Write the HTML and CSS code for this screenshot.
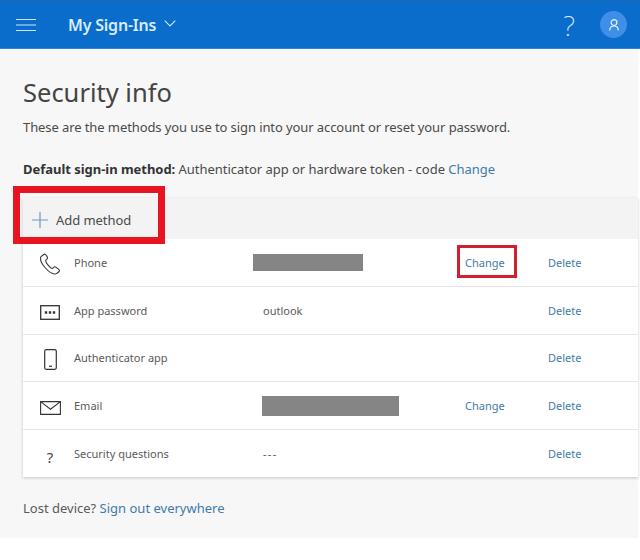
FILE: index.html
```html
<!DOCTYPE html>
<html lang="en">
<head>
<meta charset="utf-8">
<title>Security info</title>
<link rel="stylesheet" href="styles.css">
</head>
<body>
<header class="topbar">
  <svg class="burger" width="20" height="12" viewBox="0 0 20 12"><path d="M0 .5h20M0 6h20M0 11.500h20" stroke="#cfe6fb" stroke-width="1" fill="none"/></svg>
  <span class="brand">My Sign-Ins</span>
  <svg class="chev" width="12" height="7" viewBox="0 0 12 7"><path d="M.7.7 6 6l5.300-5.300" stroke="#cfe6fb" stroke-width="1.100" fill="none"/></svg>
  <span class="help">?</span>
  <span class="avatar">
    <svg width="10" height="12" viewBox="0 0 10 12"><circle cx="5" cy="3.600" r="2.900" fill="none" stroke="#e8f3fd" stroke-width="1.200"/><path d="M.7 11.500c0-3 1.600-4.500 4.300-4.500s4.300 1.500 4.300 4.500" fill="none" stroke="#e8f3fd" stroke-width="1.200"/></svg>
  </span>
</header>
<main class="content">
  <h1 class="title">Security info</h1>
  <p class="intro">These are the methods you use to sign into your account or reset your password.</p>
  <p class="default"><b>Default sign-in method:</b> Authenticator app or hardware token - code <a class="link">Change</a></p>
  <section class="card">
    <div class="toolbar">
      <svg width="16" height="16" viewBox="0 0 16 16"><path d="M8 0v16M0 8h16" stroke="#6f97c0" stroke-width="1.200" fill="none"/></svg>
      <span>Add method</span>
    </div>
    <div class="row">
      <span class="icon"><svg width="22" height="22" viewBox="0 0 22 22"><path d="M5.500 1 2 3.500C.8 6 2.500 10.500 6 14.500s8 7 11 6.300c1.500-.5 3-1.700 3.500-3 .2-1-3.500-4-4.800-4-1 0-1.500 1.800-2.700 1.700-1.800-.3-6.500-6-6.300-8 .2-1 1.800-1.300 1.800-2.300C8.500 4 6.700 1 5.500 1Z" fill="none" stroke="#3a3a3a" stroke-width="1.100"/></svg></span>
      <span class="name">Phone</span>
      <span class="value"><i class="redact redact-a"></i></span>
      <a class="link change">Change</a>
      <a class="link delete">Delete</a>
    </div>
    <div class="row">
      <span class="icon"><svg width="20" height="15" viewBox="0 0 20 15"><rect x=".7" y=".7" width="18.600" height="13.600" fill="none" stroke="#333" stroke-width="1.300"/><path d="M4.800 7.500h2.400M8.800 7.500h2.400M12.800 7.500h2.400" stroke="#333" stroke-width="2.400" fill="none"/></svg></span>
      <span class="name">App password</span>
      <span class="value">outlook</span>
      <a class="link delete">Delete</a>
    </div>
    <div class="row">
      <span class="icon"><svg width="13" height="21" viewBox="0 0 13 21"><rect x=".7" y=".7" width="11.600" height="19.600" rx="1.500" fill="none" stroke="#333" stroke-width="1.200"/><path d="M5 17.300h3" stroke="#333" stroke-width="1.200"/></svg></span>
      <span class="name">Authenticator app</span>
      <span class="value"></span>
      <a class="link delete">Delete</a>
    </div>
    <div class="row">
      <span class="icon"><svg width="21" height="14" viewBox="0 0 21 14"><path d="M.6.600h19.800v12.800H.6zM.6.600l9.900 7.600L20.400.6" fill="none" stroke="#333" stroke-width="1.100"/></svg></span>
      <span class="name">Email</span>
      <span class="value"><i class="redact redact-b"></i></span>
      <a class="link change">Change</a>
      <a class="link delete">Delete</a>
    </div>
    <div class="row">
      <span class="icon qmark">?</span>
      <span class="name">Security questions</span>
      <span class="value dashes">---</span>
      <a class="link delete">Delete</a>
    </div>
  </section>
  <p class="lost">Lost device? <a class="link">Sign out everywhere</a></p>
</main>
<div class="mark mark-add"></div>
<div class="mark mark-change"></div>
</body>
</html>
```
FILE: styles.css
```css
* { box-sizing: border-box; }
html, body { margin: 0; height: 100%; background: #fff; overflow: hidden; }
body { font-family: "Noto Sans", "Open Sans", sans-serif; color: #404040; position: relative; }
.topbar { height: 49px; background: #0a6ccb; display: flex; align-items: center; padding: 0 13px 0 16px; border-bottom: 1px solid #2f86d6; border-top: 1px solid #1a69b8; }
.burger { flex: none; }
.brand { margin-left: 32px; font-size: 16px; font-weight: 600; color: #d9ecfc; letter-spacing: -.2px; }
.chev { margin-left: 8px; margin-top: -2px; }
.help { margin-left: auto; font-size: 28px; color: #d8ebfb; font-weight: 200; line-height: 1; }
.avatar { margin-left: 25px; width: 27px; height: 27px; border-radius: 50%; background: #3f8ee8; display: flex; align-items: center; justify-content: center; }
.content { width: 638px; height: 489px; background: #f7f7f7; padding-top: 25px; }
.title { margin: 0 0 0 23px; font-size: 25.500px; font-weight: 400; line-height: 36px; color: #444; }
.intro { margin: 8px 0 0 23px; font-size: 13px; line-height: 18px; letter-spacing: -.09px; color: #4a4a4a; }
.default { margin: 24px 0 0 23px; font-size: 13px; line-height: 18px; letter-spacing: -.03px; color: #4a4a4a; }
.default b { font-weight: 700; color: #333; }
.link { color: #3f7ba8; }
.card { margin: 20px 0 0 23px; background: #fff; box-shadow: 0 1px 3px rgba(0,0,0,.2); height: 279px; display: flex; flex-direction: column; }
.toolbar { height: 41px; flex: none; background: #f3f3f3; display: flex; align-items: center; gap: 8px; padding: 2px 0 0 9px; font-size: 13px; letter-spacing: -.05px; color: #4a4a4a; }
.row { flex: 1; display: flex; align-items: center; font-size: 11px; border-bottom: 1px solid #e8e8e8; color: #5a5a5a; }
.row:last-child { border-bottom: 0; }
.icon { width: 51px; display: flex; justify-content: center; padding: 4px 0 0 3px; flex: none; }
.qmark { font-size: 15px; line-height: 18px; color: #444; padding-top: 6px; }
.name { width: 189px; flex: none; }
.value { width: 195px; flex: none; }
.dashes { letter-spacing: 1.300px; }
.redact { display: block; background: #858585; }
.redact-a { width: 110px; height: 17px; margin-left: -10px; }
.redact-b { width: 137px; height: 20px; margin-left: -1px; }
.change { position: absolute; left: 465px; }
.delete { position: absolute; left: 548px; }
.lost { margin: 22px 0 0 23px; font-size: 13px; line-height: 18px; color: #5a5a5a; }
.mark { position: absolute; }
.mark-add { left: 13px; top: 186px; width: 152px; height: 58px; border: 7px solid #e8141f; }
.mark-change { left: 457px; top: 245px; width: 60px; height: 33px; border: 3px solid #cf1f30; }
```
